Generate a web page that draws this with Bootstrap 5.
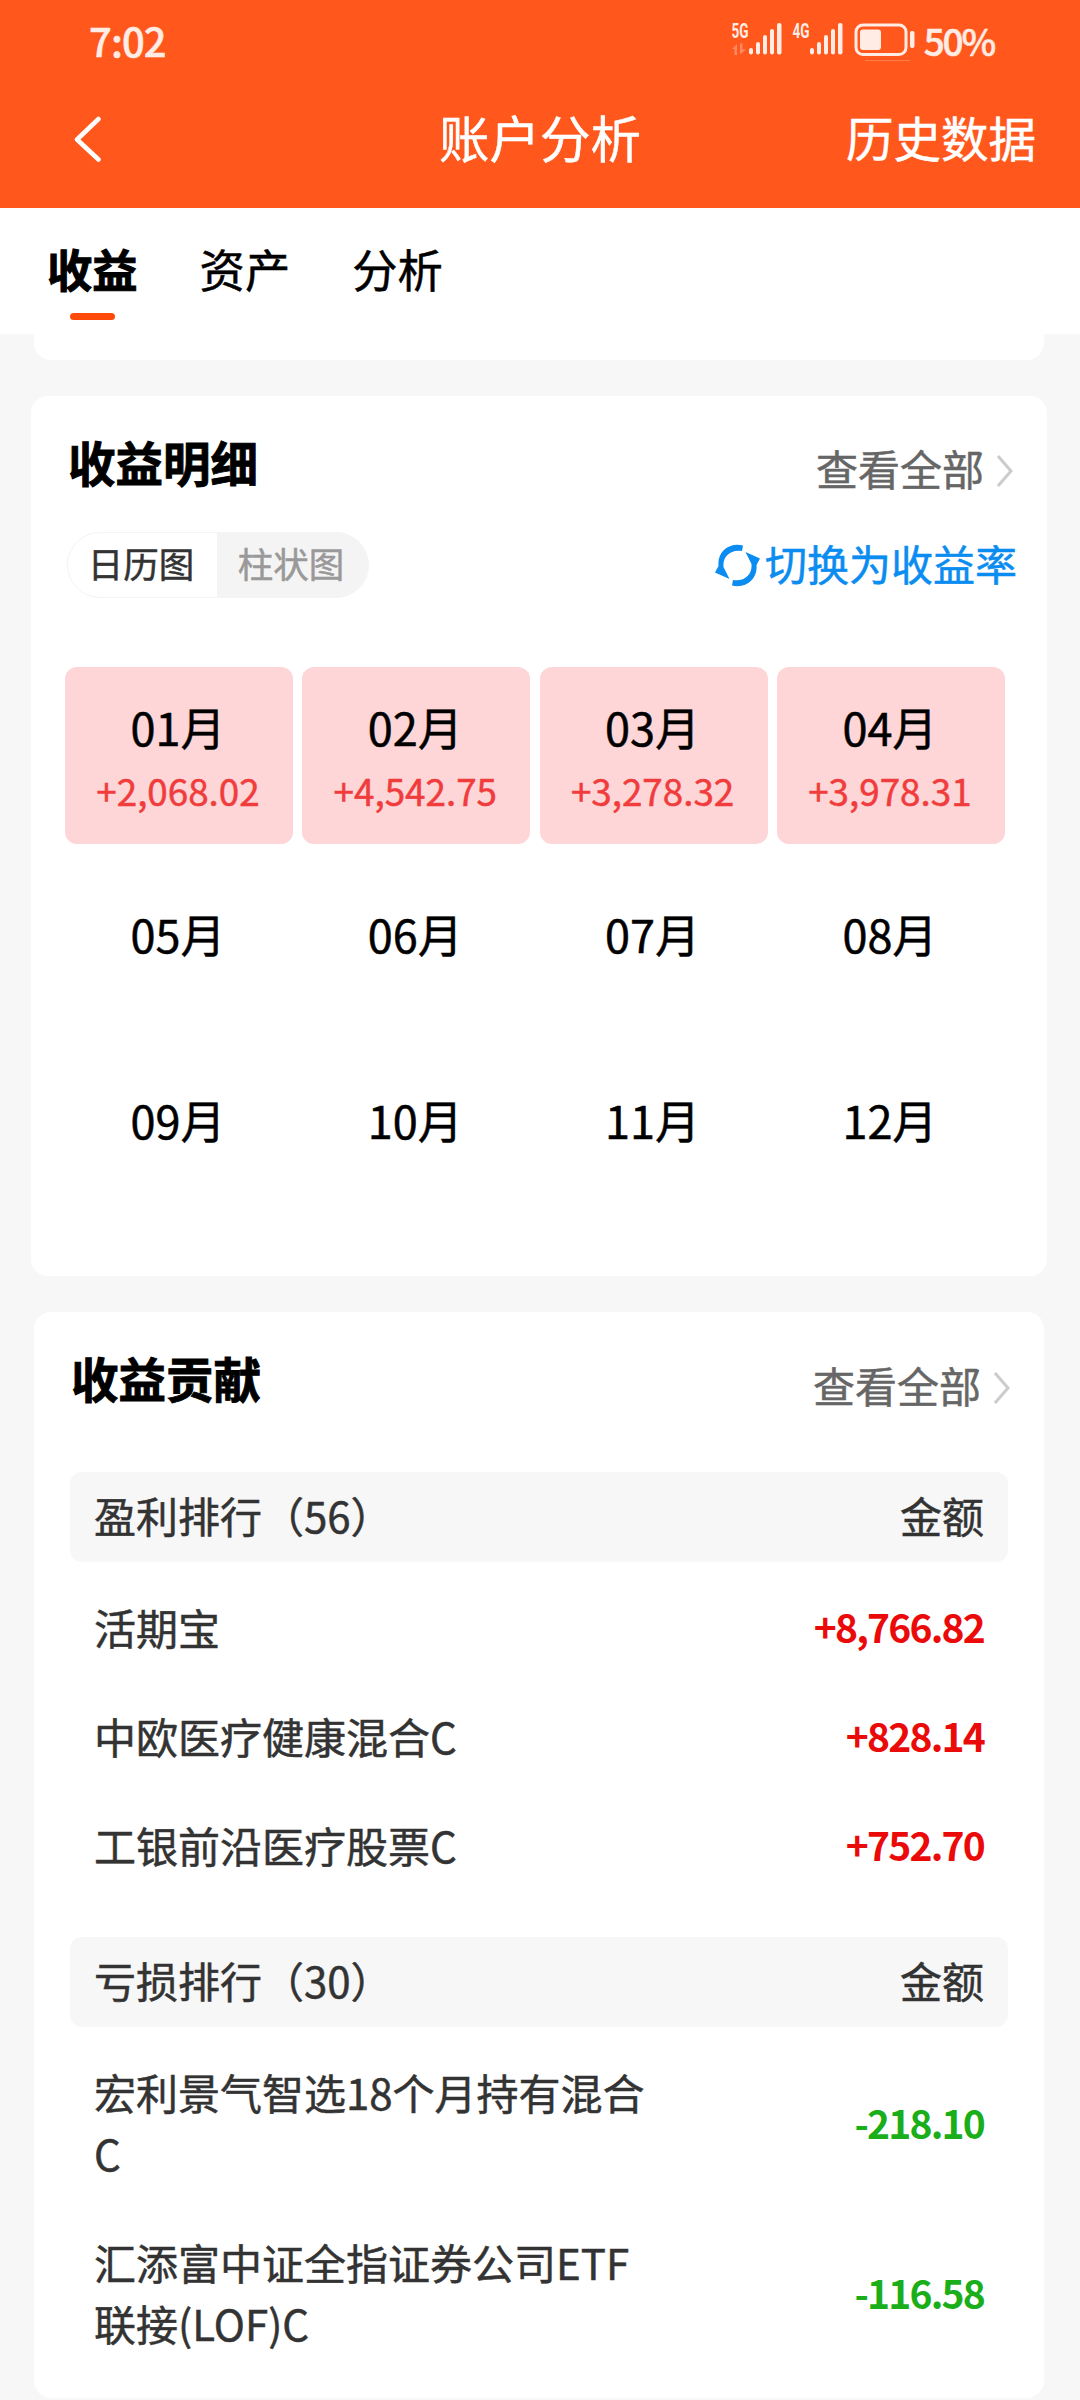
<!DOCTYPE html>
<html lang="zh-CN">
<head>
<meta charset="utf-8">
<meta name="viewport" content="width=device-width, initial-scale=1">
<title>账户分析</title>
<link href="https://cdn.jsdelivr.net/npm/bootstrap@5.3.0/dist/css/bootstrap.min.css" rel="stylesheet">
<style>
body{width:1080px;height:2400px;overflow:hidden;background:#f7f7f7;color:#000;font-family:"Noto Sans CJK SC",sans-serif;line-height:1;-webkit-text-stroke:.5px}
a{color:inherit;text-decoration:none}
svg{display:block;flex:none}
.app-head{background:#ff571c;color:#fff;height:208px}
.status-row{height:80px;padding:0 86px 0 89px;color:#ffece4}
.status-row svg text{-webkit-text-stroke:0}
.clock{font-size:40px;font-weight:500;letter-spacing:-.9px}
.batt-pct{font-size:37px;font-weight:500;letter-spacing:-2.2px;margin-left:9px}
.title-row{height:118px;display:grid;grid-template-columns:1fr auto 1fr;padding:0 44px}
.back{padding-left:30px}
.page-title{font-size:50.5px;font-weight:400;margin:0;padding-bottom:5px}
.history{font-size:47.5px;padding-bottom:4px}
.tab-row{height:126px;padding:36px 0 0 47px;gap:62px}
.tab-item{font-size:45.3px;line-height:49px;height:76px}
.tab-item.current{font-weight:700;-webkit-text-stroke:1px}
.tab-item.current::after{content:"";width:45px;height:8px;border-radius:4px;background:#ff4a0a;margin-top:20px}
.panel{background:#fff;border-radius:17px}
.panel-prev{height:26px;margin:0 36px 36px 34px;border-radius:0 0 17px 17px}
.panel-detail{height:880px;margin:0 33px 36px 31px;padding:0 30px 0 34px}
.panel-contrib{height:1086px;margin:0 36px 0 34px;padding:0 36px}
.panel-top{height:136px}
.panel-contrib .panel-top{height:160px}
.panel-title{font-size:47.5px;font-weight:700;margin:0;padding:37px 0 0 3px;-webkit-text-stroke:.9px}
.panel-contrib .panel-title{padding:37px 0 0 1px}
.more{font-size:42px;color:#666;gap:13px;height:42px;margin-top:51px}
.panel-detail .more{margin-right:3px}
.panel-contrib .more{margin-right:-3px;margin-top:52px}
.more svg{margin-top:6px}
.seg{height:66px;width:302px;margin-left:2px;border-radius:33px;background:#f4f4f4;font-size:35.5px;border:1px solid #f4f4f4;overflow:hidden}
.seg-on{background:#fff;color:#333;width:149px;padding:0 3px 4px 0}
.seg-off{color:#999;padding:0 3px 4px 0}
.swap{color:#0a8cf0;font-size:42px;gap:5px}
.swap span{padding-bottom:5px}
.months{display:grid;grid-template-columns:repeat(4,228px);column-gap:9.3px}
.months-full{margin-top:69px}
.months-empty{margin-top:30px;grid-auto-rows:186px}
.month{height:177px;border-radius:12px;font-size:45px;padding:37px 2px 0 0}
.month.gain{background:#fed6d7}
.month b{font-weight:400;line-height:46px}
.month span{font-size:36.8px;line-height:40px;color:#f03c3c;margin-top:20px}
.rank-bar{height:90px;border-radius:12px;background:#f7f7f7;padding:0 24px 4px;font-size:42px;color:#333}
.rank-gap{margin-top:36px}
.rank-list{padding:12px 24px 0}
.rank-item{height:109px;font-size:42px;color:#333;padding-bottom:4px}
.rank-item.two-line{height:170px}
.fund{width:562px;line-height:61px}
.amt{font-size:39px;font-weight:700;letter-spacing:-1.8px;-webkit-text-stroke:0}
.up{color:#eb0a0a}
.down{color:#1aae1a}
</style>
</head>
<body>
<header class="app-head">
  <div class="status-row d-flex align-items-center justify-content-between">
    <span class="clock">7:02</span>
    <div class="d-flex align-items-center">
      <svg width="183" height="50" viewBox="732 15 183 50" fill="#ffece4">
        <text x="731.5" y="37.5" font-family="Roboto" font-weight="700" font-size="20" textLength="17" lengthAdjust="spacingAndGlyphs">5G</text>
        <path d="M732 49l5-5v11h-2.500v-6zM740 43.500v11l6-5h-3.500v-6z" opacity=".35"/>
        <g id="bars"><rect x="749" y="48" width="4" height="6.500" rx="2"/><rect x="756" y="42" width="4" height="12.500" rx="2"/><rect x="763" y="35" width="4" height="19.500" rx="2"/><rect x="770" y="29" width="4" height="25.500" rx="2"/><rect x="777" y="23" width="4.500" height="31.500" rx="2"/></g>
        <text x="792.500" y="37.5" font-family="Roboto" font-weight="700" font-size="20" textLength="17" lengthAdjust="spacingAndGlyphs">4G</text>
        <use href="#bars" x="61"/>
        <rect x="856" y="25" width="50" height="29.500" rx="7" fill="none" stroke="#ffece4" stroke-width="3"/>
        <rect x="860" y="29.500" width="21" height="20.500" rx="3"/>
        <rect x="910" y="31" width="4.500" height="17" rx="2"/>
        <rect x="865" y="60" width="45" height="1" opacity=".25"/>
      </svg>
      <span class="batt-pct">50%</span>
    </div>
  </div>
  <nav class="title-row align-items-center">
    <a href="#" class="back"><svg width="27" height="46" viewBox="0 0 27 46" fill="none" stroke="#fff" stroke-width="4.500" stroke-linecap="round" stroke-linejoin="round"><path d="M24.500 3L3 23.500L24.500 43.500"/></svg></a>
    <h1 class="page-title">账户分析</h1>
    <a href="#" class="history text-end">历史数据</a>
  </nav>
</header>

<nav class="tab-row bg-white d-flex">
  <a href="#" class="tab-item current d-flex flex-column align-items-center">收益</a>
  <a href="#" class="tab-item">资产</a>
  <a href="#" class="tab-item">分析</a>
</nav>

<main>
  <div class="panel panel-prev"></div>

  <section class="panel panel-detail">
    <div class="panel-top d-flex justify-content-between">
      <h2 class="panel-title">收益明细</h2>
      <a href="#" class="more d-flex align-items-center">查看全部
        <svg width="17" height="34" viewBox="0 0 17 34" fill="none" stroke="#ccc" stroke-width="3"><path d="M1 2L14 17L1 32"/></svg></a>
    </div>
    <div class="d-flex justify-content-between align-items-center">
      <div class="seg d-flex">
        <span class="seg-on d-flex align-items-center justify-content-center">日历图</span>
        <span class="seg-off d-flex align-items-center justify-content-center flex-fill">柱状图</span>
      </div>
      <a href="#" class="swap d-flex align-items-center">
        <svg width="45" height="43" viewBox="0 0 45 43" fill="#0a8cf0"><path id="half" d="M28 1.500C14 -2 2 8 3.500 22L0 28.500L14.500 35L8.500 23C7.500 13 15 5 27 7Z"/><use href="#half" transform="rotate(180 22.500 21.500)"/></svg>
        <span>切换为收益率</span></a>
    </div>
    <div class="months months-full">
      <div class="month gain d-flex flex-column align-items-center"><b>01月</b><span>+2,068.02</span></div>
      <div class="month gain d-flex flex-column align-items-center"><b>02月</b><span>+4,542.75</span></div>
      <div class="month gain d-flex flex-column align-items-center"><b>03月</b><span>+3,278.32</span></div>
      <div class="month gain d-flex flex-column align-items-center"><b>04月</b><span>+3,978.31</span></div>
    </div>
    <div class="months months-empty">
      <div class="month text-center"><b>05月</b></div>
      <div class="month text-center"><b>06月</b></div>
      <div class="month text-center"><b>07月</b></div>
      <div class="month text-center"><b>08月</b></div>
      <div class="month text-center"><b>09月</b></div>
      <div class="month text-center"><b>10月</b></div>
      <div class="month text-center"><b>11月</b></div>
      <div class="month text-center"><b>12月</b></div>
    </div>
  </section>

  <section class="panel panel-contrib">
    <div class="panel-top d-flex justify-content-between">
      <h2 class="panel-title">收益贡献</h2>
      <a href="#" class="more d-flex align-items-center">查看全部
        <svg width="17" height="34" viewBox="0 0 17 34" fill="none" stroke="#ccc" stroke-width="3"><path d="M1 2L14 17L1 32"/></svg></a>
    </div>
    <div class="rank-bar d-flex align-items-center justify-content-between"><span>盈利排行（56）</span><span>金额</span></div>
    <div class="rank-list">
      <div class="rank-item d-flex align-items-center justify-content-between"><span class="fund">活期宝</span><span class="amt up">+8,766.82</span></div>
      <div class="rank-item d-flex align-items-center justify-content-between"><span class="fund">中欧医疗健康混合C</span><span class="amt up">+828.14</span></div>
      <div class="rank-item d-flex align-items-center justify-content-between"><span class="fund">工银前沿医疗股票C</span><span class="amt up">+752.70</span></div>
    </div>
    <div class="rank-bar rank-gap d-flex align-items-center justify-content-between"><span>亏损排行（30）</span><span>金额</span></div>
    <div class="rank-list">
      <div class="rank-item two-line d-flex align-items-center justify-content-between"><span class="fund">宏利景气智选18个月持有混合C</span><span class="amt down">-218.10</span></div>
      <div class="rank-item two-line d-flex align-items-center justify-content-between"><span class="fund">汇添富中证全指证券公司ETF联接(LOF)C</span><span class="amt down">-116.58</span></div>
    </div>
  </section>
</main>
<script src="https://cdn.jsdelivr.net/npm/bootstrap@5.3.0/dist/js/bootstrap.bundle.min.js"></script>
</body>
</html>
